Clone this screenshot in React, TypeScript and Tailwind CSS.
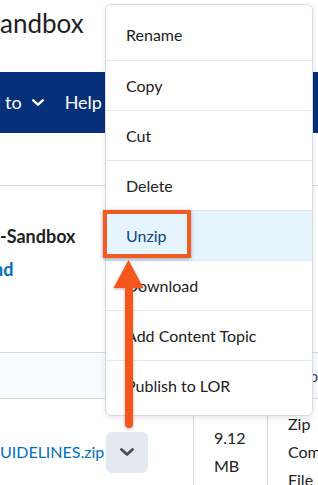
const menuItems = [
  "Rename",
  "Copy",
  "Cut",
  "Delete",
  "Unzip",
  "Download",
  "Add Content Topic",
  "Publish to LOR",
];

function Chevron({ className }: { className?: string }) {
  return (
    <svg viewBox="0 0 14 8" fill="none" stroke="currentColor" strokeWidth="2.8" strokeLinecap="round" strokeLinejoin="round" className={className}>
      <path d="M1.5 1.5 7 6.5l5.5-5" />
    </svg>
  );
}

export default function App() {
  return (
    <div className="relative h-[485px] w-[318px] overflow-hidden bg-white font-['Lato','Open_Sans',sans-serif] text-[#202122]">
      {/* page behind the menu */}
      <div className="h-[72px] pt-[8px] text-[26px] leading-[30px]">andbox</div>

      <nav className="flex h-[61px] items-center bg-[#06317a] pl-[5px] text-[18px] text-white">
        <span>to</span>
        <Chevron className="ml-[10px] h-[7px] w-[12px]" />
        <span className="ml-[21px]">Help</span>
      </nav>

      <div className="h-[53px] border-b border-[#d3d9e3]" />

      <div className="h-[167px] border-b border-[#d3d9e3] pt-[38px]">
        <p className="text-[18px] font-bold leading-[24px]">-Sandbox</p>
        <p className="mt-[9px] -ml-[7px] text-[18px] font-bold leading-[24px] text-[#006fbf]">nd</p>
      </div>

      <div className="grid h-[46px] grid-cols-[193px_74px_1fr] items-center border-b border-[#d3d9e3] bg-[#f9fbff] text-[16px] text-[#494c50]">
        <span />
        <span className="pl-[21px]">Size</span>
        <span className="pl-[26px]">Type</span>
      </div>

      <div className="grid h-[106px] grid-cols-[193px_74px_1fr] text-[16px] leading-[28px]">
        <div className="flex items-center">
          <span className="text-[#006fbf]">UIDELINES.zip</span>
          <button className="ml-[2px] flex h-[41px] w-[42px] items-center justify-center rounded-md bg-[#e3e9f1] text-[#494c50]">
            <Chevron className="h-[8px] w-[14px]" />
          </button>
        </div>
        <div className="flex items-center border-l border-[#d3d9e3] pl-[20px]">9.12 MB</div>
        <div className="flex items-center border-l border-[#d3d9e3] pl-[20px]">
          <span className="w-[30px]">Zip Compressed File</span>
        </div>
      </div>

      {/* context menu */}
      <div className="absolute left-[105px] top-[4px] w-[208px] rounded-md border border-[#d6dce5] bg-white py-[5px] shadow-[0_2px_6px_rgba(0,0,0,0.1)]">
        {menuItems.map((item, i) => (
          <div
            key={item}
            className={
              "flex h-[50px] items-center pl-[20px] text-[16px] " +
              (i > 0 ? "border-t border-[#e3e9f1] " : "") +
              (item === "Unzip" ? "bg-[#e6f5fd] text-[#0b4486]" : "")
            }
          >
            {item}
          </div>
        ))}
      </div>

      {/* annotation */}
      <div className="absolute left-[103px] top-[210px] h-[48px] w-[88px] border-[4px] border-[#f15a24] shadow-[0_1px_4px_rgba(0,0,0,0.35)]" />
      <svg className="pointer-events-none absolute left-0 top-0 h-[485px] w-[318px]" viewBox="0 0 318 485">
        <defs>
          <filter id="sh" x="-50%" y="-10%" width="200%" height="120%">
            <feDropShadow dx="0" dy="1" stdDeviation="1.5" floodColor="#000" floodOpacity="0.3" />
          </filter>
        </defs>
        <g filter="url(#sh)" fill="#f4561f">
          <polygon points="128.5,260 113.5,288 143.5,288" />
          <rect x="125" y="286" width="8" height="142" rx="4" />
        </g>
      </svg>
    </div>
  );
}
